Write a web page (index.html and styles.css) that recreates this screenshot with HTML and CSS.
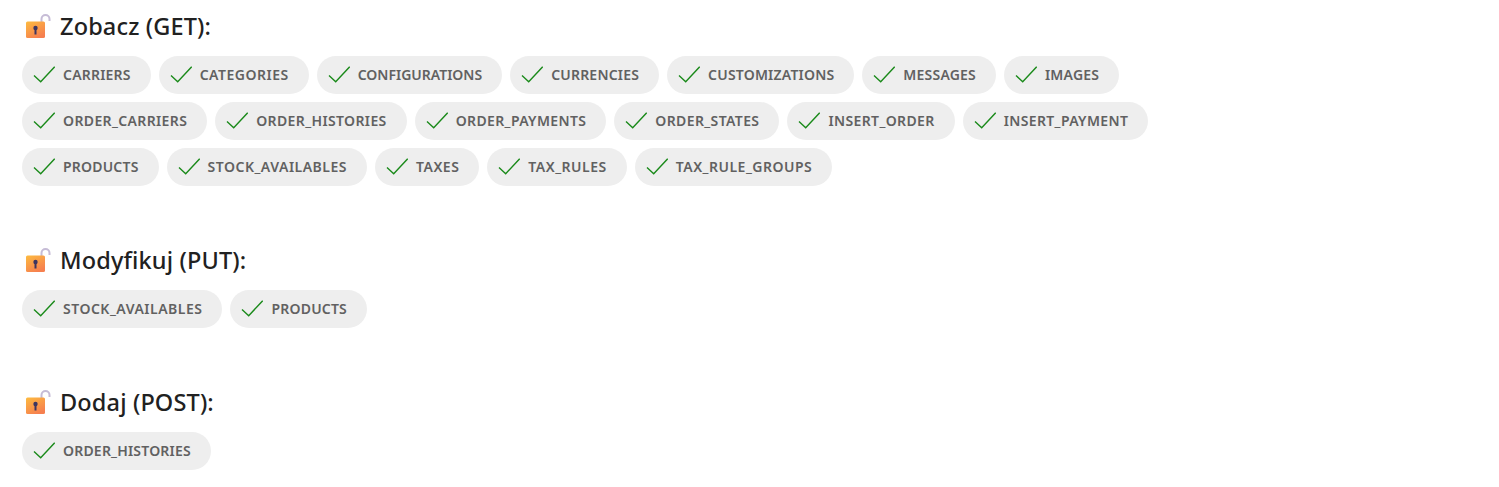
FILE: index.html
```html
<!DOCTYPE html>
<html lang="pl">
<head>
    <meta charset="UTF-8">
    <meta name="viewport" content="width=device-width, initial-scale=1.0">
    <title>Uprawnienia API</title>
    <link rel="stylesheet" href="styles.css">
</head>
<body>
    <svg class="defs" width="0" height="0" aria-hidden="true">
        <defs>
            <linearGradient id="lockBody" x1="0" y1="0" x2="0.6" y2="1">
                <stop offset="0" stop-color="#fdbb3f"/>
                <stop offset="1" stop-color="#f6804f"/>
            </linearGradient>
            <symbol id="lock" viewBox="0 0 26 26">
                <path d="M16.5 10V6a4 4 0 0 1 8 0V8" fill="none" stroke="#c6bcd6" stroke-width="2"/>
                <rect x="1" y="8.500" width="19" height="16.500" rx="1.500" fill="url(#lockBody)"/>
                <circle cx="10.500" cy="15" r="2.200" fill="#3d3560"/>
                <rect x="9.500" y="15" width="2" height="6.500" fill="#3d3560"/>
            </symbol>
            <symbol id="check" viewBox="0 0 22 18">
                <path d="M1 9.500L7.700 15.700L21.700 0.700" fill="none" stroke="#1a8a1a" stroke-width="1.400"/>
            </symbol>
        </defs>
    </svg>

    <section class="group">
        <h2><svg class="lock"><use href="#lock"/></svg>Zobacz (GET):</h2>
        <div class="chips">
            <div class="chip-row">
                <span class="chip"><svg class="check"><use href="#check"/></svg>CARRIERS</span>
                <span class="chip chip-long"><svg class="check"><use href="#check"/></svg>CATEGORIES</span>
                <span class="chip chip-tight"><svg class="check"><use href="#check"/></svg>CONFIGURATIONS</span>
                <span class="chip"><svg class="check"><use href="#check"/></svg>CURRENCIES</span>
                <span class="chip"><svg class="check"><use href="#check"/></svg>CUSTOMIZATIONS</span>
                <span class="chip"><svg class="check"><use href="#check"/></svg>MESSAGES</span>
                <span class="chip"><svg class="check"><use href="#check"/></svg>IMAGES</span>
            </div>
            <div class="chip-row">
                <span class="chip chip-mid"><svg class="check"><use href="#check"/></svg>ORDER_CARRIERS</span>
                <span class="chip chip-mid"><svg class="check"><use href="#check"/></svg>ORDER_HISTORIES</span>
                <span class="chip chip-mid"><svg class="check"><use href="#check"/></svg>ORDER_PAYMENTS</span>
                <span class="chip chip-mid"><svg class="check"><use href="#check"/></svg>ORDER_STATES</span>
                <span class="chip chip-mid"><svg class="check"><use href="#check"/></svg>INSERT_ORDER</span>
                <span class="chip chip-mid"><svg class="check"><use href="#check"/></svg>INSERT_PAYMENT</span>
            </div>
            <div class="chip-row">
                <span class="chip"><svg class="check"><use href="#check"/></svg>PRODUCTS</span>
                <span class="chip chip-long"><svg class="check"><use href="#check"/></svg>STOCK_AVAILABLES</span>
                <span class="chip chip-long"><svg class="check"><use href="#check"/></svg>TAXES</span>
                <span class="chip chip-long"><svg class="check"><use href="#check"/></svg>TAX_RULES</span>
                <span class="chip chip-long"><svg class="check"><use href="#check"/></svg>TAX_RULE_GROUPS</span>
            </div>
        </div>
    </section>

    <section class="group">
        <h2><svg class="lock"><use href="#lock"/></svg>Modyfikuj (PUT):</h2>
        <div class="chips">
            <div class="chip-row">
                <span class="chip chip-long"><svg class="check"><use href="#check"/></svg>STOCK_AVAILABLES</span>
                <span class="chip"><svg class="check"><use href="#check"/></svg>PRODUCTS</span>
            </div>
        </div>
    </section>

    <section class="group">
        <h2><svg class="lock"><use href="#lock"/></svg>Dodaj (POST):</h2>
        <div class="chips">
            <div class="chip-row">
                <span class="chip"><svg class="check"><use href="#check"/></svg>ORDER_HISTORIES</span>
            </div>
        </div>
    </section>
</body>
</html>
```

FILE: styles.css
```css
body {
    font-family: "Noto Sans", sans-serif;
    background-color: #fff;
    margin: 0;
    padding: 11px 22px 0;
}
.defs {
    display: block;
}
.group {
    margin-bottom: 59px;
}
.group:last-child {
    margin-bottom: 0;
}
h2 {
    display: flex;
    align-items: center;
    height: 30px;
    margin: 0 0 15px;
    font-size: 23.5px;
    font-weight: 500;
    letter-spacing: 0.15px;
    color: #212121;
}
.lock {
    width: 26px;
    height: 26px;
    margin: 0 9px 0 3px;
}
.chips {
    display: flex;
    flex-direction: column;
    gap: 8px;
}
.chip-row {
    display: flex;
    gap: 8px;
}
.chip {
    box-sizing: border-box;
    display: flex;
    align-items: center;
    height: 38px;
    padding: 0 20px 2px 11px;
    border-radius: 19px;
    background-color: #eee;
    color: #616161;
    font-size: 14px;
    font-weight: 600;
    letter-spacing: 0.2px;
}
.chip-tight {
    letter-spacing: 0;
}
.chip-mid {
    letter-spacing: 0.37px;
}
.chip-long {
    letter-spacing: 0.5px;
}
.check {
    width: 22px;
    height: 18px;
    margin: 2px 8px 0 0;
}
```
